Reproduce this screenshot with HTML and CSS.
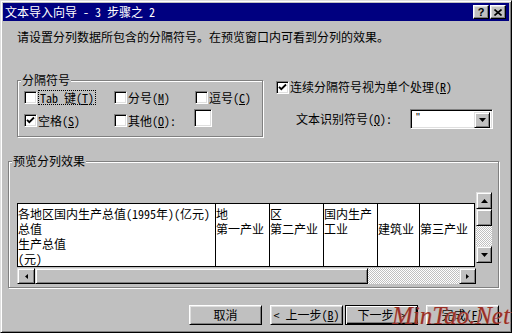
FILE: index.html
```html
<!DOCTYPE html>
<html lang="zh-CN">
<head>
<meta charset="utf-8">
<title>文本导入向导 - 3 步骤之 2</title>
<link rel="stylesheet" href="styles.css">
</head>
<body>
<div class="window">
  <div class="titlebar">
    <span class="title">文本导入向导 - 3 步骤之 2</span>
    <div class="tbtns">
      <span class="tbtn help">?</span>
      <span class="tbtn close"><svg width="8" height="7" viewBox="0 0 8 7"><path d="M0.5 0.5 L7.5 6.5 M7.5 0.5 L0.5 6.5" stroke="#000" stroke-width="1.6" fill="none"/></svg></span>
    </div>
  </div>
  <div class="body">
    <p class="intro">请设置分列数据所包含的分隔符号。在预览窗口内可看到分列的效果。</p>
    <div class="options">
      <div class="group g1">
        <span class="legend">分隔符号</span>
        <div class="cbgrid">
          <div class="cb"><span class="box"></span><span class="focus">Tab 键(<u>T</u>)</span></div>
          <div class="cb"><span class="box"></span><span>分号(<u>M</u>)</span></div>
          <div class="cb"><span class="box"></span><span>逗号(<u>C</u>)</span></div>
          <div class="cb"><span class="box"><svg class="check" width="9" height="9" viewBox="0 0 9 9"><path d="M1 3.8 L3.3 6.2 L8 1.5" stroke="#000" stroke-width="1.8" fill="none"/></svg></span><span>空格(<u>S</u>)</span></div>
          <div class="cb"><span class="box"></span><span>其他(<u>O</u>):</span></div>
          <div class="otherbox"></div>
        </div>
      </div>
      <div class="right">
        <div class="cb"><span class="box"><svg class="check" width="9" height="9" viewBox="0 0 9 9"><path d="M1 3.8 L3.3 6.2 L8 1.5" stroke="#000" stroke-width="1.8" fill="none"/></svg></span><span>连续分隔符号视为单个处理(<u>R</u>)</span></div>
        <div class="qual">
          <span class="qual-label">文本识别符号(<u>Q</u>):</span>
          <div class="combo">
            <span class="quote">"</span>
            <span class="sbtn drop"><svg width="7" height="4" viewBox="0 0 7 4"><path d="M0 0 L7 0 L3.5 4Z" fill="#000"/></svg></span>
          </div>
        </div>
      </div>
    </div>
    <div class="group g2">
      <span class="legend">预览分列效果</span>
      <div class="preview">
        <div class="pmain">
          <div class="tablewrap">
            <div class="tbl">
              <div class="cell">各地区国内生产总值(1995年)(亿元)<br>总值<br>生产总值<br>(元)</div>
              <div class="cell">地<br>第一产业</div>
              <div class="cell">区<br>第二产业</div>
              <div class="cell">国内生产<br>工业</div>
              <div class="cell"><br>建筑业</div>
              <div class="cell"><br>第三产业</div>
            </div>
          </div>
          <div class="vscroll">
            <span class="sbtn vbtn"><svg width="7" height="4" viewBox="0 0 7 4"><path d="M0 4 L7 4 L3.5 0Z" fill="#000"/></svg></span>
            <span class="sbtn vthumb"></span>
            <span class="track"></span>
            <span class="sbtn vbtn"><svg width="7" height="4" viewBox="0 0 7 4"><path d="M0 0 L7 0 L3.5 4Z" fill="#000"/></svg></span>
          </div>
        </div>
        <div class="hscroll">
          <span class="sbtn hbtn hleft"><svg width="3" height="5" viewBox="0 0 3 5"><path d="M3 0 L3 5 L0 2.5Z" fill="#000"/></svg></span>
          <span class="sbtn hthumb"></span>
          <span class="track"></span>
          <span class="sbtn hbtn hright"><svg width="3" height="5" viewBox="0 0 3 5"><path d="M0 0 L0 5 L3 2.5Z" fill="#000"/></svg></span>
        </div>
      </div>
    </div>
    <div class="buttons">
      <span class="btn cancel">取消</span>
      <span class="btn back">&lt; 上一步(<u>B</u>)</span>
      <span class="btn next default">下一步 &gt;</span>
      <span class="btn finish">完成(<u>F</u>)</span>
    </div>
  </div>
  <div class="watermark">MinTao.Net</div>
</div>
</body>
</html>
```

FILE: styles.css
```css
* { box-sizing: border-box; }
html, body { margin: 0; padding: 0; }
body {
  width: 512px;
  height: 333px;
  overflow: hidden;
  background: #c0c0c0;
  font-family: "Noto Sans Mono CJK SC", "Noto Sans CJK SC", "DejaVu Sans", sans-serif;
  font-size: 12px;
  color: #000;
}
u { text-decoration: underline; text-underline-offset: 1px; }

.window {
  position: relative;
  width: 512px;
  height: 333px;
  background: #c0c0c0;
  border: 1px solid;
  border-color: #dfdfdf #000 #000 #dfdfdf;
  box-shadow: inset 1px 1px #fff, inset -1px -1px #808080;
  padding: 2px;
  display: flex;
  flex-direction: column;
}

.titlebar {
  height: 18px;
  background: #000080;
  color: #fff;
  display: flex;
  align-items: center;
  justify-content: space-between;
  padding: 0 3px 0 2px;
  flex: none;
}
.title { line-height: 14px; white-space: nowrap; }
.tbtns { display: flex; gap: 1px; }
.tbtn {
  width: 16px;
  height: 14px;
  background: #c0c0c0;
  border: 1px solid;
  border-color: #fff #000 #000 #fff;
  box-shadow: inset -1px -1px #808080, inset 1px 1px #dfdfdf;
  display: flex;
  align-items: center;
  justify-content: center;
  color: #000;
}
.help {
  font-family: "Liberation Sans", sans-serif;
  font-weight: bold;
  font-size: 11px;
  line-height: 11px;
}

.body { flex: 1; padding: 0 0 0 5px; }

.intro {
  margin: 8px 0 0 9px;
  line-height: 16px;
  white-space: nowrap;
}

.options { display: flex; margin: 35px 0 0 9px; }

.group {
  border: 1px solid #808080;
  box-shadow: inset 1px 1px #fff, 1px 1px #fff;
}
.legend {
  display: block;
  width: max-content;
  line-height: 14px;
  margin: -8px 0 0 3px;
  padding: 0 1px;
  background: #c0c0c0;
  white-space: nowrap;
}

.g1 { width: 246px; height: 57px; }
.g1 .legend { margin-bottom: -1px; }
.cbgrid {
  display: grid;
  grid-template-columns: 90px 81px auto;
  grid-template-rows: 23px 23px;
  align-items: center;
  padding: 0 0 4px 6px;
}

.cb {
  display: flex;
  align-items: center;
  gap: 1px;
  white-space: nowrap;
  line-height: 14px;
}
.box {
  width: 13px;
  height: 13px;
  flex: none;
  background: #fff;
  border: 1px solid;
  border-color: #808080 #fff #fff #808080;
  box-shadow: inset 1px 1px #000, inset -1px -1px #dfdfdf;
  display: flex;
  align-items: center;
  justify-content: center;
}
.check { display: block; }
.focus {
  border: 1px dotted #000;
  padding: 0 1px;
  line-height: 13px;
}
.otherbox {
  align-self: start;
  width: 18px;
  height: 18px;
  margin-left: -1px;
  background: #fff;
  border: 1px solid;
  border-color: #808080 #fff #fff #808080;
  box-shadow: inset 1px 1px #000, inset -1px -1px #dfdfdf;
}

.right {
  margin-left: 13px;
  display: flex;
  flex-direction: column;
}
.qual {
  display: flex;
  align-items: center;
  margin: 15px 0 0 20px;
  line-height: 14px;
}
.qual-label { width: 114px; white-space: nowrap; }
.combo {
  width: 83px;
  height: 20px;
  background: #fff;
  border: 1px solid;
  border-color: #808080 #fff #fff #808080;
  box-shadow: inset 1px 1px #000, inset -1px -1px #dfdfdf;
  padding: 2px;
  display: flex;
  justify-content: space-between;
}
.quote {
  font-family: "Liberation Sans", sans-serif;
  font-size: 11px;
  line-height: 10px;
  padding-left: 3px;
}

.sbtn {
  display: flex;
  align-items: center;
  justify-content: center;
  background: #c0c0c0;
  border: 1px solid;
  border-color: #dfdfdf #000 #000 #dfdfdf;
  box-shadow: inset 1px 1px #fff, inset -1px -1px #808080;
  flex: none;
}
.drop { width: 16px; height: 16px; }

.g2 { margin-top: 24px; width: 491px; }
.preview { margin: 24px 0 3px 8px; width: 476px; }
.pmain { display: flex; height: 76px; }
.tablewrap { width: 459px; padding-top: 11px; }
.tbl {
  width: 458px;
  display: grid;
  grid-template-columns: 198px 54px 54px 54px 42px 54px;
  border: 1px solid #000;
  background: #fff;
}
.cell {
  height: 62px;
  padding-top: 2px;
  line-height: 15px;
  white-space: nowrap;
  overflow: hidden;
  border-right: 1px solid #000;
}
.cell:last-child { border-right: none; }

.vscroll {
  width: 16px;
  height: 71px;
  display: flex;
  flex-direction: column;
}
.vbtn { height: 17px; }
.vthumb { height: 17px; }
.track {
  flex: 1;
  background-image: repeating-conic-gradient(#fff 0% 25%, #c0c0c0 0% 50%);
  background-size: 2px 2px;
}
.hscroll {
  display: flex;
  width: 459px;
  height: 16px;
}
.hleft { width: 18px; }
.hright { width: 17px; }
.hthumb { width: 333px; }

.buttons { display: flex; margin: 17px 0 0 181px; }
.btn {
  width: 73px;
  height: 20px;
  display: flex;
  align-items: center;
  justify-content: center;
  white-space: nowrap;
  line-height: 14px;
  border: 1px solid;
  border-color: #fff #000 #000 #fff;
  box-shadow: inset 1px 1px #dfdfdf, inset -1px -1px #808080;
}
.back { margin-left: 8px; }
.next { margin-left: 2px; }
.finish { margin-left: 8px; }
.default {
  border-color: #000;
  box-shadow: inset 1px 1px #fff, inset -1px -1px #000, inset -2px -2px #808080;
}

.watermark {
  position: absolute;
  left: 391px;
  top: 302px;
  font-family: "Liberation Serif", serif;
  font-style: italic;
  font-size: 25px;
  line-height: 25px;
  color: #9a2f26;
  text-shadow: 1px 0 0 rgba(230, 150, 130, 0.6);
  white-space: nowrap;
}
```
